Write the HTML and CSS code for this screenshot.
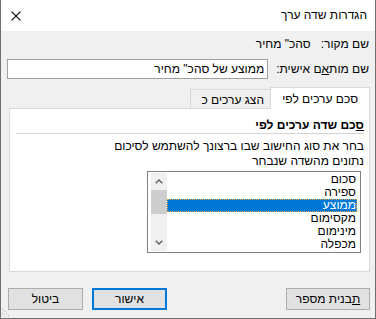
FILE: index.html
```html
<!DOCTYPE html>
<html lang="he" dir="rtl">
<head>
    <meta charset="UTF-8">
    <title>הגדרות שדה ערך</title>
    <link rel="stylesheet" href="styles.css">
</head>
<body>

    <div class="dialog">
        <div class="titlebar">
            <span class="title">הגדרות שדה ערך</span>
            <svg class="close" width="10" height="10" viewBox="0 0 10 10">
                <path d="M0.5 0.5 L9.5 9.5 M9.5 0.5 L0.5 9.5" stroke="#1a1a1a" stroke-width="1.1"/>
            </svg>
        </div>

        <div class="fields">
            <div class="row1">
                <span>שם מקור:</span>
                <span>סהכ" מחיר</span>
            </div>
            <div class="row2">
                <label for="customName">שם מות<u>א</u>ם אישית:</label>
                <input type="text" id="customName" value='ממוצע של סהכ" מחיר'>
            </div>
        </div>

        <div class="tabs">
            <div class="tab-strip">
                <div class="tab active">סכם ערכים לפי</div>
                <div class="tab">הצג ערכים כ</div>
                <div class="tab-fill"></div>
            </div>
            <div class="panel">
                <div class="heading"><u>ס</u>כם שדה ערכים לפי</div>
                <p class="hint">בחר את סוג החישוב שבו ברצונך להשתמש לסיכום<br>נתונים מהשדה שנבחר</p>

                <div class="listbox">
                    <ul class="items">
                        <li>סכום</li>
                        <li>ספירה</li>
                        <li class="selected">ממוצע</li>
                        <li>מקסימום</li>
                        <li>מינימום</li>
                        <li>מכפלה</li>
                    </ul>
                    <div class="scrollbar">
                        <div class="arrow">
                            <svg width="8" height="5" viewBox="0 0 8 5"><path d="M0.7 4.3 L4 1 L7.3 4.3" fill="none" stroke="#606060" stroke-width="1.4"/></svg>
                        </div>
                        <div class="thumb"></div>
                        <div class="track"></div>
                        <div class="arrow">
                            <svg width="8" height="5" viewBox="0 0 8 5"><path d="M0.7 0.7 L4 4 L7.3 0.7" fill="none" stroke="#606060" stroke-width="1.4"/></svg>
                        </div>
                    </div>
                </div>
            </div>
        </div>

        <div class="buttons">
            <button class="btn wide"><u>ת</u>בנית מספר</button>
            <div class="spacer"></div>
            <button class="btn default">אישור</button>
            <button class="btn">ביטול</button>
        </div>

        <svg class="grip" width="10" height="10" viewBox="0 0 10 10">
            <rect x="1" y="1" width="1" height="1" fill="#b0b0b0"/>
            <rect x="3" y="3" width="1" height="1" fill="#b0b0b0"/>
            <rect x="5" y="5" width="1" height="1" fill="#b0b0b0"/>
            <rect x="7" y="7" width="1" height="1" fill="#b0b0b0"/>
            <rect x="1" y="5" width="1" height="1" fill="#b0b0b0"/>
            <rect x="3" y="7" width="1" height="1" fill="#b0b0b0"/>
        </svg>
    </div>

</body>
</html>
```

FILE: styles.css
```css
body{
    margin:0;
    background-color:#f0f0f0;
}

.dialog{
    position:relative;
    width:376px;
    height:319px;
    box-sizing:border-box;
    border:1px solid #707070;
    border-top:none;
    background-color:#f0f0f0;
    direction:rtl;
    font-family:"Liberation Sans", "DejaVu Sans", sans-serif;
    font-size:12px;
    color:#000;
}

.titlebar{
    height:31px;
    background-color:#fff;
    display:flex;
    align-items:center;
    justify-content:space-between;
    padding:0 8px 0 10px;
}

.title{
    line-height:15px;
}

.close{
    display:block;
}

/* שורות שם מקור / שם מותאם */
.fields{
    padding:6px 6px 0 6px;
}

.row1{
    display:flex;
    gap:10px;
    line-height:15px;
}

.row2{
    display:flex;
    align-items:center;
    gap:8px;
    margin-top:7px;
}

.row2 label{
    line-height:15px;
    white-space:nowrap;
}

.row2 input{
    flex:1;
    min-width:0;
    height:20px;
    box-sizing:border-box;
    border:1px solid #a0a0a0;
    padding:0 3px;
    margin:0;
    font:inherit;
    direction:rtl;
    background-color:#fff;
    outline:none;
}

/* לשוניות */
.tabs{
    margin-top:8px;
    padding:0 5px 0 8px;
}

.tab-strip{
    display:flex;
    align-items:flex-end;
    height:22px;
}

.tab{
    width:80px;
    height:20px;
    box-sizing:border-box;
    border:1px solid #d9d9d9;
    border-right:none;
    padding:3px 6px 0 0;
    line-height:15px;
    white-space:nowrap;
    overflow:hidden;
}

.tab.active{
    width:100px;
    height:22px;
    border-right:1px solid #d9d9d9;
    border-bottom:none;
    background-color:#fff;
    padding:4px 11px 0 0;
}

.tab-fill{
    flex:1;
    border-bottom:1px solid #d9d9d9;
}

.panel{
    height:163px;
    box-sizing:border-box;
    border:1px solid #d9d9d9;
    border-top:none;
    background-color:#fff;
    overflow:hidden;
}

.heading{
    margin:0 5px 0 6px;
    padding-top:9px;
    line-height:15px;
    font-weight:bold;
    border-bottom:1px solid #d5d5d5;
}

.hint{
    margin:5px 5px 0 0;
    line-height:15px;
}

/* רשימת פונקציות */
.listbox{
    display:flex;
    width:214px;
    height:82px;
    box-sizing:border-box;
    margin:2px 8px 0 0;
    border:1px solid #828282;
    padding:1px 3px 1px 3px;
    background-color:#fff;
}

.items{
    flex:1;
    list-style:none;
    margin:0;
    padding:0;
}

.items li{
    height:13px;
    line-height:13px;
    padding-right:1px;
}

.items li.selected{
    background-color:#0078d7;
    color:#fff;
    outline:1px dotted #e8a040;
    outline-offset:-1px;
}

.scrollbar{
    width:16px;
    display:flex;
    flex-direction:column;
    background-color:#f0f0f0;
}

.arrow{
    height:17px;
    display:flex;
    align-items:center;
    justify-content:center;
}

.arrow svg{
    display:block;
}

.thumb{
    height:24px;
    background-color:#cdcdcd;
}

.track{
    flex:1;
}

/* כפתורים */
.buttons{
    display:flex;
    gap:9px;
    margin-top:16px;
    padding:0 5px 0 7px;
}

.spacer{
    flex:1;
}

.btn{
    width:75px;
    height:22px;
    box-sizing:border-box;
    border:1px solid #adadad;
    background-color:#e1e1e1;
    font:inherit;
    color:#000;
    padding:0;
    margin:0;
}

.btn.wide{
    width:84px;
}

.btn.default{
    border:2px solid #0078d7;
}

.grip{
    position:absolute;
    left:0;
    bottom:0;
}
```
